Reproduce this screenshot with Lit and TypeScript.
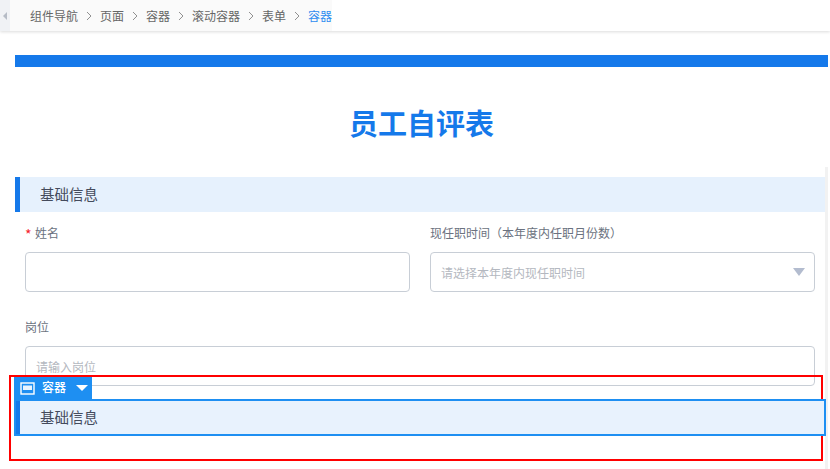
import { LitElement, html, css } from "lit";
import { customElement } from "lit/decorators.js";

const crumbs = ["组件导航", "页面", "容器", "滚动容器", "表单"];

@customElement("app-root")
export class AppRoot extends LitElement {
  static styles = css`
    :host {
      display: block;
      position: relative;
      width: 830px;
      height: 469px;
      overflow: hidden;
      background: #fff;
      font-family: "Noto Sans CJK SC", "Liberation Sans", sans-serif;
      color: #606266;
      font-size: 12px;
    }
    .nav {
      height: 31px;
      display: flex;
      align-items: center;
      background: #fff;
      box-shadow: 0 1px 3px rgba(0, 0, 0, 0.14);
    }
    .collapse {
      width: 10px;
      height: 31px;
      background: #f0f2f5;
      display: flex;
      align-items: center;
      justify-content: center;
      flex: none;
    }
    .crumbs {
      display: flex;
      align-items: center;
      height: 31px;
      width: 322px;
      flex: none;
      box-sizing: border-box;
      padding-left: 20px;
      gap: 8px;
      background: #fafafa;
      white-space: nowrap;
    }
    .crumb { color: #666; }
    .crumb.on { color: #2d8cf0; }
    .page { padding: 24px 2px 0 15px; }
    .bar { height: 12px; background: #1579ea; }
    .title {
      margin: 0;
      height: 110px;
      display: flex;
      align-items: center;
      justify-content: center;
      font-size: 29px;
      font-weight: 700;
      color: #1579ea;
    }
    .sheet { margin-right: 3px; }
    .section {
      height: 35px;
      box-sizing: border-box;
      border-left: 5px solid #1579ea;
      background: #e6f1fd;
      padding: 0 0 2px 20px;
      display: flex;
      align-items: center;
      font-size: 14.5px;
      color: #444b5c;
    }
    .fields {
      display: grid;
      grid-template-columns: 385px 385px;
      column-gap: 20px;
      row-gap: 24px;
      padding: 10px 10px 0;
    }
    .wide { grid-column: 1 / -1; }
    .label {
      height: 20px;
      margin-bottom: 10px;
      display: flex;
      align-items: center;
      color: #6b7280;
      font-size: 12px;
    }
    .req {
      color: #f5222d;
      width: 10px;
      font-size: 14px;
      transform: translateY(2px);
    }
    .input {
      box-sizing: border-box;
      height: 40px;
      border: 1px solid #c8ced6;
      border-radius: 4px;
      display: flex;
      align-items: center;
      justify-content: space-between;
      padding: 0 9px 0 10px;
      color: #b4b8c0;
      font-size: 12px;
    }
    .caret {
      width: 0;
      height: 0;
      border-left: 6px solid transparent;
      border-right: 6px solid transparent;
      border-top: 8px solid #b3bccf;
    }
    .scroll {
      position: absolute;
      left: 825px;
      top: 167px;
      bottom: 0;
      width: 3px;
      background: #f2f2f2;
    }
    .red {
      position: absolute;
      left: 9px;
      top: 375px;
      width: 810px;
      height: 82px;
      border: 2px solid #ff0000;
    }
    .sel {
      position: absolute;
      left: 14px;
      top: 399px;
      width: 808px;
      height: 33px;
      border: 2px solid #1e8ff2;
      display: flex;
    }
    .sel .section {
      flex: 1;
      height: 33px;
      background: #e8f2fd;
      border-left-width: 4px;
      padding-left: 20px;
    }
    .tag {
      position: absolute;
      left: 14px;
      top: 377px;
      width: 78px;
      height: 23px;
      background: #1e8ff2;
      display: flex;
      align-items: center;
      box-sizing: border-box;
      padding: 0 0 1px 6px;
      color: #fff;
      font-size: 12px;
      font-weight: 500;
    }
    .tag span { margin: 0 10px 3px 7px; }
    .tag-caret {
      width: 0;
      height: 0;
      border-left: 6px solid transparent;
      border-right: 6px solid transparent;
      border-top: 6px solid #fff;
    }
  `;

  render() {
    return html`
      <div class="nav">
        <div class="collapse">
          <svg width="5" height="8" viewBox="0 0 5 8"><path d="M4 0 L0 4 L4 8 Z" fill="#b6bcc6"></path></svg>
        </div>
        <div class="crumbs">
          ${crumbs.map(
            (c) => html`<span class="crumb">${c}</span>
              <svg width="6" height="10" viewBox="0 0 6 10"><path d="M1 1 L5 5 L1 9" fill="none" stroke="#8f8f8f" stroke-width="1"></path></svg>`
          )}
          <span class="crumb on">容器</span>
        </div>
      </div>
      <div class="page">
        <div class="bar"></div>
        <h1 class="title">员工自评表</h1>
        <div class="sheet">
          <div class="section">基础信息</div>
          <div class="fields">
            <div>
              <div class="label"><span class="req">*</span>姓名</div>
              <div class="input"></div>
            </div>
            <div>
              <div class="label">现任职时间（本年度内任职月份数）</div>
              <div class="input">请选择本年度内现任职时间<i class="caret"></i></div>
            </div>
            <div class="wide">
              <div class="label">岗位</div>
              <div class="input">请输入岗位</div>
            </div>
          </div>
        </div>
      </div>
      <div class="scroll"></div>
      <div class="red"></div>
      <div class="sel"><div class="section">基础信息</div></div>
      <div class="tag">
        <svg width="15" height="13" viewBox="0 0 15 13"><rect x="1" y="1" width="13" height="11" fill="none" stroke="#fff" stroke-width="1.4"></rect><rect x="3" y="3.5" width="9" height="4.5" fill="#fff" opacity="0.9"></rect></svg>
        <span>容器</span>
        <i class="tag-caret"></i>
      </div>
    `;
  }
}
